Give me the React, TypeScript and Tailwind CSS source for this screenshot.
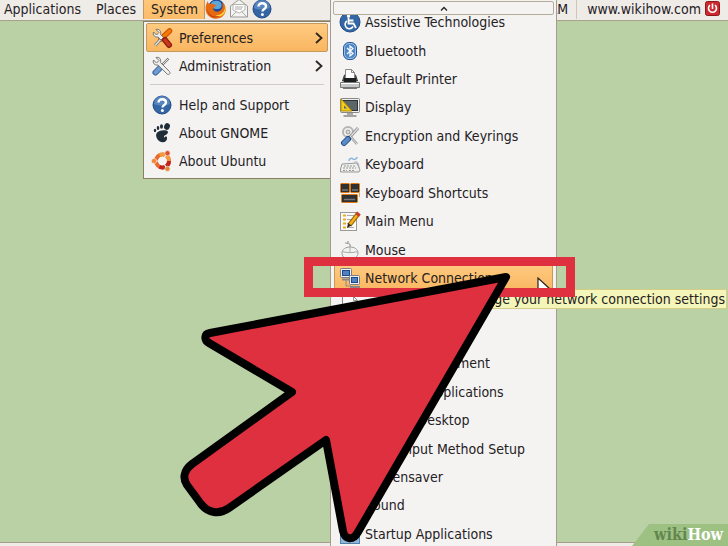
import type { ReactNode } from "react";

type IconProps = { children: ReactNode };

function Icon({ children }: IconProps) {
  return (
    <svg viewBox="0 0 22 22" className="size-[22px] shrink-0" fill="none" aria-hidden="true">
      {children}
    </svg>
  );
}

function ToolsIcon({ handle, edge }: { handle: string; edge: string }) {
  return (
    <Icon>
      <path d="M17.5 3.5 9 12" stroke="#777" strokeWidth="2.4" />
      <path d="M17.5 3.5 9 12" stroke="#e8e8e8" strokeWidth="1" />
      <path d="M9.500 12.500 4.500 17.500" stroke={edge} strokeWidth="6" strokeLinecap="round" />
      <path d="M9.500 12.500 4.500 17.500" stroke={handle} strokeWidth="4" strokeLinecap="round" />
      <path d="M5 2.500 8 5.500 5.500 8 2.500 5C1.500 8 3.500 10.500 7 10L16 19C17.500 20.500 20 18.500 18.500 16.500L9.500 7.500C10.500 4 8 1.500 5 2.500Z" fill="#eeeeec" stroke="#777" />
    </Icon>
  );
}

function PreferencesIcon() {
  return (
    <Icon>
      <path d="M18.500 4 10 12" stroke="#c8510a" strokeWidth="5.500" strokeLinecap="round" />
      <path d="M18.500 4 10 12" stroke="#f57900" strokeWidth="3.500" strokeLinecap="round" />
      <path d="M10 12 4 18.500" stroke="#777" strokeWidth="3" />
      <path d="M10 12 4 18.500" stroke="#ddd" strokeWidth="1.500" />
      <path d="M5 2.500 8 5.500 5.500 8 2.500 5C1.500 8 3.500 10.500 7 10L10 13 12.500 10.500 9.500 7.500C10.500 4 8 1.500 5 2.500Z" fill="#eeeeec" stroke="#777" />
      <path d="m14 13 4 5" stroke="#8e1a0c" strokeWidth="6" strokeLinecap="round" />
      <path d="m14 13 4 5" stroke="#c9381e" strokeWidth="3.500" strokeLinecap="round" />
    </Icon>
  );
}

function HelpIcon() {
  return (
    <Icon>
      <circle cx="11" cy="11" r="9" fill="#3465a4" stroke="#204a87" />
      <path d="M3 10a8 8 0 0 1 16 0c-5 2-11 2-16 0Z" fill="#6f9bd0" opacity=".6" />
      <path d="M7.500 8.500c0-4.500 7.500-4 7.500 0 0 2.500-3.500 2.500-3.500 5" stroke="#fff" strokeWidth="2.400" />
      <circle cx="11.400" cy="16.500" r="1.500" fill="#fff" />
    </Icon>
  );
}

function GnomeIcon() {
  return (
    <Icon>
      <g fill="#1f2d38">
        <ellipse cx="16" cy="4.500" rx="2.800" ry="3.400" transform="rotate(25 16 4.500)" />
        <ellipse cx="10.500" cy="4.500" rx="1.500" ry="2.300" />
        <ellipse cx="7" cy="6" rx="1.300" ry="2" />
        <ellipse cx="4" cy="8.500" rx="1.200" ry="1.700" />
        <path d="M11 8.500c5-1 7 .5 5.500 3-1 1.500-3 1.500-3.500 3-.3 1.300 1.500 1.200 1.500-.2 2.500-.3 2.300 5.700-2.500 6C7 20.500 4 14.500 5.500 11.500c1-2 3-2.600 5.500-3Z" />
      </g>
    </Icon>
  );
}

function UbuntuIcon() {
  return (
    <Icon>
      <circle cx="11.500" cy="11" r="6.500" stroke="#e9682c" strokeWidth="4" />
      <path d="M8.500 5.200a6.500 6.500 0 0 1 9.500 5.600" stroke="#f39a3c" strokeWidth="4" />
      <path d="M18 11a6.500 6.500 0 0 1-9.500 5.800" stroke="#c4211c" strokeWidth="4" />
      <path d="m11.500 11 4.500-8M11.500 11l4.500 8M11.500 11H3" stroke="#f4f3f2" strokeWidth="1.200" />
      <circle cx="11.500" cy="11" r="4.200" fill="#f4f3f2" />
      <circle cx="3" cy="11" r="2.600" fill="#ee8434" stroke="#f4f3f2" strokeWidth=".6" />
      <circle cx="16.500" cy="3.200" r="2.600" fill="#df5029" stroke="#f4f3f2" strokeWidth=".6" />
      <circle cx="16.500" cy="18.800" r="2.600" fill="#e08a35" stroke="#f4f3f2" strokeWidth=".6" />
    </Icon>
  );
}

function FirefoxIcon() {
  return (
    <Icon>
      <circle cx="11.500" cy="10" r="8.500" fill="#234b94" />
      <path d="M6 5c3-3 8-3 10 0 2 4-1 6-4 6-4 0-6-2-6-6Z" fill="#5da6dc" />
      <path d="M3 3c0 2 0 2 2 3 3-.5 5 0 6 2l-3 2c0 4 5 5 8 2 2-2 2-5 1-8 5 4 5 11 0 15-5 3-12 2-15-3C0 12 0 7 3 3Z" fill="#e66a12" />
      <path d="M19.500 6c2 7-3 12-9 11 5 4 13-2 9-11Z" fill="#ffd83c" />
      <path d="M2 11c2 7 8 9 13 7-5 3-12 1-13-7Z" fill="#b93210" />
    </Icon>
  );
}

function MailIcon() {
  return (
    <Icon>
      <path d="M2.500 8 11 1.500 19.500 8v11h-17Z" fill="#f3f3f1" stroke="#999" />
      <path d="M5 6.500h12V12l-6 3-6-3Z" fill="#fff" stroke="#b5b5b0" />
      <path d="M7 9h8M7 11h7M3 19l5.500-5.500M19 19l-5.500-5.500" stroke="#a8a8a4" />
    </Icon>
  );
}

function AccessIcon() {
  return (
    <Icon>
      <circle cx="11" cy="11" r="10" fill="#3465a4" stroke="#204a87" />
      <circle cx="9.500" cy="5" r="1.700" fill="#fff" />
      <path d="M9.500 6.500v6h5l2.500 4.500M10 9.500h4.500" stroke="#fff" strokeWidth="1.800" />
      <path d="M8 10a4.200 4.200 0 1 0 6 5.500" stroke="#fff" strokeWidth="1.600" />
    </Icon>
  );
}

function BluetoothIcon() {
  return (
    <Icon>
      <rect x="4.500" y="2.500" width="13" height="17" rx="5.500" fill="#4d87c7" stroke="#28589a" />
      <rect x="5.500" y="3.500" width="11" height="15" rx="4.500" stroke="#9dc0e4" />
      <path d="m8 8 6 5.500-3 2.500V6l3 2.500L8 14" stroke="#fff" strokeWidth="1.200" />
    </Icon>
  );
}

function PrinterIcon() {
  return (
    <Icon>
      <path d="m3.500 13 2-6h11l2 6Z" fill="#555753" stroke="#2e3436" />
      <path d="M6.500 1.500h6l3 3v7h-9Z" fill="#fff" stroke="#888" />
      <path d="M12.500 1.500v3h3" stroke="#888" />
      <rect x="5" y="10" width="12" height="4" fill="#1c1f20" />
      <path d="M1.500 14.500h19v5h-19Z" fill="#c5c9c8" stroke="#777" />
      <path d="M2 15.500h18" stroke="#fff" />
      <path d="M4 20.500h14" stroke="#777" />
    </Icon>
  );
}

function DisplayIcon() {
  return (
    <Icon>
      <rect x="1.500" y="2.500" width="19" height="14" rx="1" fill="#eeeeec" stroke="#888" />
      <rect x="3.500" y="4.500" width="15" height="10" fill="#5c6668" stroke="#2e3436" />
      <path d="M2 3v12h11Z" fill="#f3cf1c" stroke="#b08a00" />
      <path d="M5 9.500v3h3Z" fill="#5c6668" />
      <path d="M8 17h6v2H8Z" fill="#aaa" />
      <path d="M4.500 20h13" stroke="#888" strokeWidth="1.500" />
    </Icon>
  );
}

function KeyringIcon() {
  return (
    <Icon>
      <circle cx="9" cy="7" r="5" stroke="#b5b5b5" strokeWidth="2" />
      <circle cx="9" cy="7" r="2" fill="#ddd" stroke="#999" />
      <path d="m19 3-8 9" stroke="#888" strokeWidth="3" />
      <path d="m19 3-8 9" stroke="#ddd" strokeWidth="1.500" />
      <path d="m11 11 7 8" stroke="#999" strokeWidth="2.500" />
      <path d="m11 11 7 8" stroke="#e5e5e5" strokeWidth="1" />
      <path d="m9 14-4 4" stroke="#204a87" strokeWidth="6" strokeLinecap="round" />
      <path d="m9 14-4 4" stroke="#5b8bc5" strokeWidth="4" strokeLinecap="round" />
    </Icon>
  );
}

function KeyboardIcon() {
  return (
    <Icon>
      <path d="M10 8c0-3 3-3 4-2s4 0 4-2" stroke="#8db4d8" strokeWidth="1.500" />
      <path d="m3 11 15-1 3 7-1 2H1.500v-3Z" fill="#eeeeec" stroke="#999" />
      <path d="M5 13h12M4 15h13M4 17.500h4M10 17.500h5" stroke="#999" strokeDasharray="2 1" />
      <path d="M15 10c2-3 5-1 5 5" stroke="#a6b3bf" />
    </Icon>
  );
}

function ShortcutsIcon() {
  return (
    <Icon>
      <g fill="#2e3032" stroke="#df7a16">
        <rect x="1.500" y="1.500" width="9" height="9" rx="1" />
        <rect x="11.500" y="1.500" width="9" height="9" rx="1" />
        <rect x="2.500" y="12.500" width="16" height="8" rx="1" />
      </g>
      <path d="M3 8h6M13 8h6M5 17.500h11" stroke="#73777a" strokeWidth="1.500" />
      <path d="M20.500 11v4" stroke="#f5a04a" />
    </Icon>
  );
}

function MainMenuIcon() {
  return (
    <Icon>
      <rect x="1.500" y="2.500" width="16" height="18" fill="#fafafa" stroke="#999" />
      <path d="M4 5.500h3M4 9.500h3M4 13.500h3M4 17.500h3" stroke="#e8ac20" strokeWidth="2" />
      <path d="M8 5.500h7M8 9.500h6M8 13.500h3M8 17.500h7" stroke="#aaa" />
      <path d="m19 4-8.500 11" stroke="#9a6500" strokeWidth="4.500" />
      <path d="m19 4-8.500 11" stroke="#f5b01e" strokeWidth="2.500" />
      <path d="m18 5.500 2-2.500" stroke="#c8402c" strokeWidth="4.500" />
      <path d="m9 13-1 5 4.500-2.500Z" fill="#332a20" />
    </Icon>
  );
}

function MouseIcon() {
  return (
    <Icon>
      <path d="M11 8c1-3-1-4-5-4M9 2v3" stroke="#999" strokeWidth="1.200" />
      <path d="M3 14c0-8 16-8 16 0s-16 9-16 0Z" fill="#f2f2f1" stroke="#999" />
      <path d="M3.500 12.500c4 1.500 11 1.500 15 0M11 8v5" stroke="#aaa" />
    </Icon>
  );
}

function NetworkIcon() {
  return (
    <Icon>
      <path d="M7 13v6h5" stroke="#888" />
      <rect x="1.500" y="1.500" width="11" height="9" rx="1" fill="#eeeeec" stroke="#7c7f86" />
      <rect x="3.500" y="3.500" width="7" height="5" fill="#5080c0" stroke="#204a87" />
      <path d="M3 12.500h8" stroke="#888" strokeWidth="2" />
      <rect x="10.500" y="8.500" width="10" height="9" rx="1" fill="#eeeeec" stroke="#7c7f86" />
      <rect x="12.500" y="10.500" width="6" height="5" fill="#5080c0" stroke="#204a87" />
      <path d="M11 20h10" stroke="#888" strokeWidth="2" />
    </Icon>
  );
}

function DocumentIcon() {
  return (
    <Icon>
      <path d="M3.500 1.500h11l4 4v15h-15Z" fill="#fafafa" stroke="#888" />
      <path d="M14.500 1.500v4h4M6 9h9M6 12h9" stroke="#999" />
    </Icon>
  );
}

function StartupIcon() {
  return (
    <Icon>
      <rect x="1.500" y="1.500" width="19" height="19" fill="#8db6d8" stroke="#5481a8" />
      <path d="M2 4h18" stroke="#3e6d98" strokeWidth="4" />
    </Icon>
  );
}

function Chevron() {
  return (
    <svg viewBox="0 0 8 14" className="ml-auto h-[14px] w-2 shrink-0" fill="none" aria-hidden="true">
      <path d="m1 2 5.500 5L1 12" stroke="#2b241c" strokeWidth="1.800" />
    </svg>
  );
}

type Item = { label: string; icon: ReactNode; active?: boolean };

const preferences: Item[] = [
  { label: "Assistive Technologies", icon: <AccessIcon /> },
  { label: "Bluetooth", icon: <BluetoothIcon /> },
  { label: "Default Printer", icon: <PrinterIcon /> },
  { label: "Display", icon: <DisplayIcon /> },
  { label: "Encryption and Keyrings", icon: <KeyringIcon /> },
  { label: "Keyboard", icon: <KeyboardIcon /> },
  { label: "Keyboard Shortcuts", icon: <ShortcutsIcon /> },
  { label: "Main Menu", icon: <MainMenuIcon /> },
  { label: "Mouse", icon: <MouseIcon /> },
  { label: "Network Connections", icon: <NetworkIcon />, active: true },
  { label: "Network Proxy", icon: <DocumentIcon /> },
  { label: "PalmOS Devices", icon: <DocumentIcon /> },
  { label: "Power Management", icon: <DocumentIcon /> },
  { label: "Preferred Applications", icon: <DocumentIcon /> },
  { label: "Remote Desktop", icon: <DocumentIcon /> },
  { label: "SCIM Input Method Setup", icon: <DocumentIcon /> },
  { label: "Screensaver", icon: <DocumentIcon /> },
  { label: "Sound", icon: <DocumentIcon /> },
  { label: "Startup Applications", icon: <StartupIcon /> },
];

const rowBase = "flex w-full items-center gap-1 whitespace-nowrap rounded-xs border pl-1 pr-1 text-left";
const rowActive = "border-[#c39a5c] bg-linear-to-b from-[#ffca80] to-[#f9b660]";

function SystemMenu() {
  return (
    <div role="menu" aria-label="System" className="absolute top-[21px] left-[143px] w-[188px] border border-[#8b7e66] bg-[#f4f3f2] px-[2px] pt-[1px] pb-[3px]">
      <button role="menuitem" className={`${rowBase} ${rowActive} h-[29px]`}>
        <PreferencesIcon /><span className="pl-[2px]">Preferences</span><Chevron />
      </button>
      <button role="menuitem" className={`${rowBase} h-7 border-transparent`}>
        <ToolsIcon handle="#6f9bd0" edge="#2e5c98" /><span className="pl-[2px]">Administration</span><Chevron />
      </button>
      <hr className="mx-1 mt-1 mb-[6px] border-[#cfccc8]" />
      <div className="grid auto-rows-[28px]">
        <button role="menuitem" className={`${rowBase} border-transparent`}>
          <HelpIcon /><span className="pl-[2px]">Help and Support</span>
        </button>
        <button role="menuitem" className={`${rowBase} border-transparent`}>
          <GnomeIcon /><span className="pl-[2px]">About GNOME</span>
        </button>
        <button role="menuitem" className={`${rowBase} border-transparent`}>
          <UbuntuIcon /><span className="pl-[2px]">About Ubuntu</span>
        </button>
      </div>
    </div>
  );
}

function PreferencesMenu() {
  return (
    <div role="menu" aria-label="Preferences" className="absolute inset-y-0 left-[330px] w-[227px] overflow-hidden border-x border-[#a79b8b] bg-[#f4f3f2] px-[3px]">
      <div className="grid h-[calc(100%+2px)] auto-rows-fr pt-2">
        {preferences.map((item) => (
          <button key={item.label} role="menuitem" className={`${rowBase} ${item.active ? rowActive : "border-transparent"}`}>
            {item.icon}
            <span>{item.label}</span>
          </button>
        ))}
      </div>
      <button aria-label="Scroll up" className="absolute inset-x-[2px] top-[1px] flex h-[14px] items-center justify-center rounded-xs border border-[#b5ac9e] bg-[#f4f3f2]">
        <svg viewBox="0 0 8 5" className="h-[5px] w-2" fill="none" aria-hidden="true">
          <path d="m1 4.500 3-3 3 3" stroke="#222" strokeWidth="1.300" />
        </svg>
      </button>
    </div>
  );
}

function TopPanel() {
  return (
    <header className="flex h-[21px] items-center border-b border-[#a9a08f] bg-[#efebe7] pb-[3px]">
      <nav className="flex items-center">
        <button className="w-[88px] pl-1 text-left">Applications</button>
        <button className="w-[55px] pl-2 text-left">Places</button>
        <button className="w-[62px] border-x border-[#c39a5c] bg-linear-to-b from-[#ffc87c] to-[#fbbc69] pl-[7px] text-left">System</button>
      </nav>
      <div className="flex items-center gap-px">
        <button aria-label="Firefox"><FirefoxIcon /></button>
        <button aria-label="Mail"><MailIcon /></button>
        <button aria-label="Help"><HelpIcon /></button>
      </div>
      <div className="ml-auto flex items-center pr-2">
        <span className="pr-2">AM</span>
        <span className="h-5 border-l border-[#cdc6bc] pl-[10px]">www.wikihow.com</span>
        <button aria-label="Power" className="ml-1">
          <svg viewBox="0 0 15 15" className="size-[15px]" fill="none" aria-hidden="true">
            <rect x=".5" y=".5" width="14" height="14" rx="2" fill="#cc2a30" stroke="#8f1518" />
            <path d="M5 4.200a4 4 0 1 0 5 0M7.500 2.500V8" stroke="#fff" strokeWidth="1.600" />
          </svg>
        </button>
      </div>
    </header>
  );
}

export default function App() {
  return (
    <main className="relative flex h-screen flex-col justify-between overflow-hidden bg-[#bad1a5] font-['DejaVu_Sans_Condensed','DejaVu_Sans',sans-serif] text-sm leading-5 text-[#24211f]">
      <TopPanel />
      <footer className="h-1 border-t border-[#a89d8c] bg-[#efebe7]" />
      <SystemMenu />
      <PreferencesMenu />

      <svg viewBox="0 0 14 20" className="absolute top-[277px] left-[537px] h-5 w-[14px]" aria-hidden="true">
        <path d="M1 1v16l4-4 3 6 3-1-3-6h5Z" fill="#fff" stroke="#29231d" strokeWidth="1.200" />
      </svg>
      <div role="tooltip" className="absolute top-[289px] right-px h-[20px] border border-[#d5cc86] bg-[#f4f5b9] px-px leading-[18px] whitespace-nowrap">
        Change your network connection settings
      </div>

      <div className="absolute top-[257px] left-[304px] h-10 w-[271px] border-9 border-[#df3040]" />
      <svg viewBox="0 0 728 546" className="absolute top-0 left-0 h-[546px] w-[728px]" aria-hidden="true">
        <path
          d="M506 277 210 333C204 334 204 340 209 343L292 392 192 464C183 471 183 479 187 485L201 504C208 513 219 515 229 508L326 440 343 531C345 540 353 541 358 532Z"
          fill="#df3040"
          stroke="#000"
          strokeWidth="8"
          strokeLinejoin="round"
        />
      </svg>

      <div className="absolute right-0 bottom-0 flex h-[22px] w-24 items-center justify-end bg-[#9dc183] pr-[5px] font-['DejaVu_Serif_Condensed','DejaVu_Serif',serif] text-base font-bold text-white [clip-path:polygon(17px_0,100%_0,100%_100%,0_100%)]">
        <span className="text-[#63864f]">wiki</span>How
      </div>
    </main>
  );
}
